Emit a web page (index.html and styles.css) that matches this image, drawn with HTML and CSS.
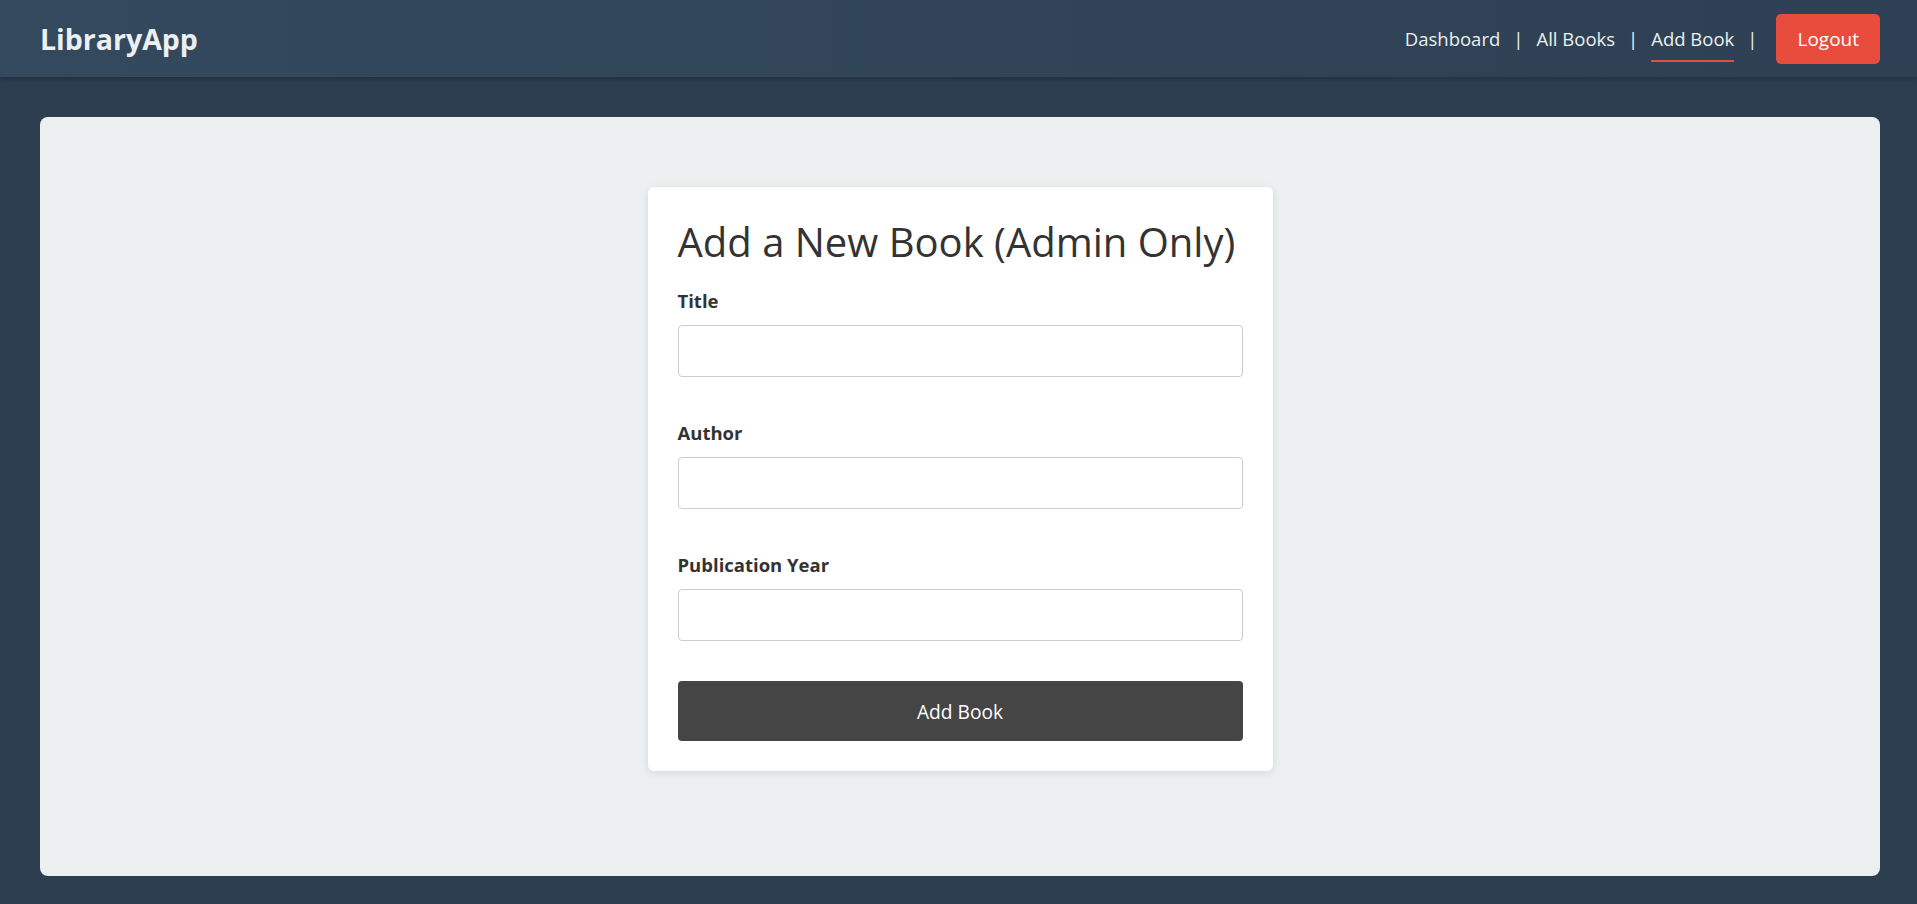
FILE: index.html
```html
<!DOCTYPE html>
<html lang="en">
<head>
<meta charset="utf-8">
<title>LibraryApp - Add Book</title>
<link rel="stylesheet" href="styles.css">
</head>
<body>
<header class="topbar">
  <div class="logo">LibraryApp</div>
  <nav class="nav">
    <a class="nav-link" href="#">Dashboard</a>
    <span class="sep">|</span>
    <a class="nav-link" href="#">All Books</a>
    <span class="sep">|</span>
    <a class="nav-link active" href="#">Add Book</a>
    <span class="sep">|</span>
    <button class="logout" type="button">Logout</button>
  </nav>
</header>
<main class="main">
  <section class="card">
    <h2 class="card-title">Add a New Book (Admin Only)</h2>
    <form class="form">
      <div class="form-group">
        <label class="label" for="title">Title</label>
        <input class="input" id="title" type="text">
      </div>
      <div class="form-group">
        <label class="label" for="author">Author</label>
        <input class="input" id="author" type="text">
      </div>
      <div class="form-group form-group-last">
        <label class="label" for="year">Publication Year</label>
        <input class="input" id="year" type="text">
      </div>
      <button class="submit" type="button">Add Book</button>
    </form>
  </section>
</main>
</body>
</html>
```
FILE: styles.css
```css
* { box-sizing: border-box; }

body {
  margin: 0;
  background: #2c3e50;
  font-family: "Open Sans", "Noto Sans", sans-serif;
  color: #333;
}

.topbar {
  height: 77px;
  display: flex;
  align-items: center;
  justify-content: space-between;
  padding: 0 37px 0 40px;
  background: linear-gradient(90deg, #34495e 0%, #2e4053 100%);
  box-shadow: 0 2px 6px rgba(0, 0, 0, 0.25);
  position: relative;
}

.logo {
  font-size: 28.5px;
  font-weight: 700;
  color: #ecf0f1;
}

.nav {
  display: flex;
  align-items: center;
  gap: 13px;
}

.nav-link {
  position: relative;
  color: #ecf0f1;
  text-decoration: none;
  font-size: 18.5px;
}

.nav-link.active::after {
  content: "";
  position: absolute;
  left: 0;
  right: 0;
  bottom: -11px;
  height: 2px;
  background: #e74c3c;
}

.sep {
  color: #ecf0f1;
  font-size: 18.5px;
}

.logout {
  margin-left: 6px;
  height: 50px;
  padding: 0 21px;
  border: none;
  border-radius: 5px;
  background: #e74c3c;
  color: #fff;
  font-family: inherit;
  font-size: 19px;
}

.main {
  margin: 40px 37px 0 40px;
  height: 759px;
  background: #ecf0f1;
  border-radius: 8px;
  padding-top: 70px;
}

.card {
  width: 625px;
  margin: 0 auto;
  padding: 30px;
  background: #fff;
  border-radius: 6px;
  box-shadow: 0 2px 8px rgba(0, 0, 0, 0.1);
}

.card-title {
  margin: 1px 0 23px;
  font-size: 40px;
  font-weight: 400;
  line-height: 48px;
  color: #333;
}

.form-group {
  display: flex;
  flex-direction: column;
  margin-bottom: 44px;
}

.form-group-last {
  margin-bottom: 40px;
}

.label {
  font-size: 18.5px;
  font-weight: 700;
  line-height: 24px;
  margin-bottom: 12px;
  color: #333;
}

.input {
  height: 52px;
  border: 1px solid #ccc;
  border-radius: 4px;
  padding: 0 12px;
  font-family: inherit;
  font-size: 16px;
}

.submit {
  display: block;
  width: 100%;
  height: 60px;
  border: none;
  border-radius: 4px;
  background: #454545;
  color: #fff;
  font-family: inherit;
  font-size: 19.2px;
}
```
